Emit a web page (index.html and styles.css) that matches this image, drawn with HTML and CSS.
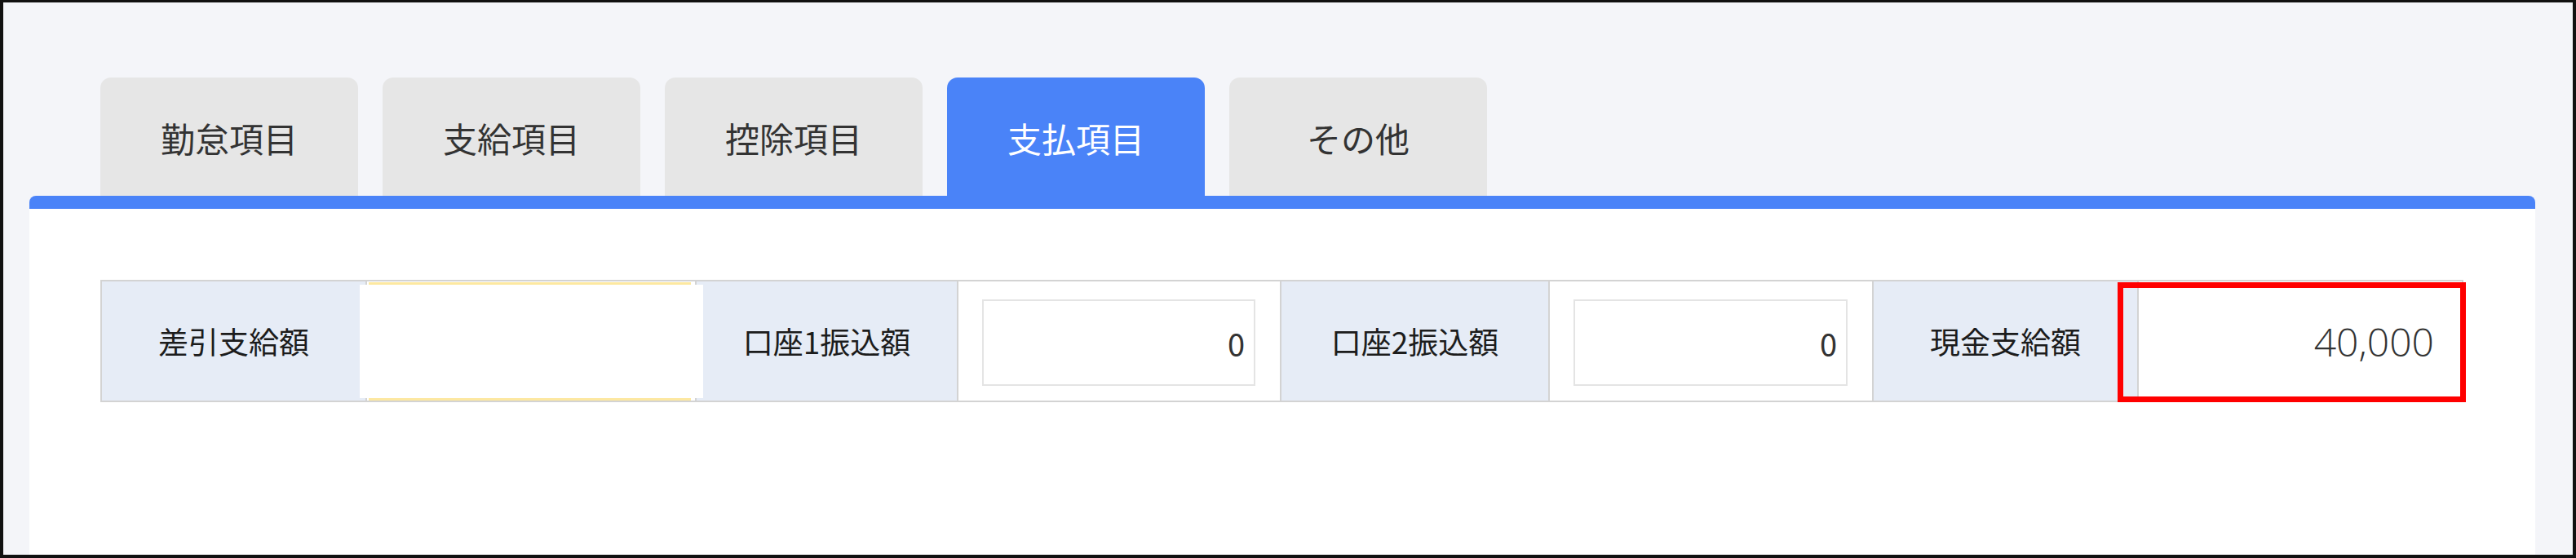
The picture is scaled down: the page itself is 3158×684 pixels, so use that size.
FILE: index.html
```html
<!DOCTYPE html>
<html lang="ja">
<head>
<meta charset="utf-8">
<title>支払項目</title>
<link rel="stylesheet" href="styles.css">
</head>
<body>
<div class="frame">
  <div class="tabs">
    <div class="tab">勤怠項目</div>
    <div class="tab">支給項目</div>
    <div class="tab">控除項目</div>
    <div class="tab active">支払項目</div>
    <div class="tab">その他</div>
  </div>
  <div class="panel">
    <table class="pay">
      <colgroup>
        <col class="c-l1"><col class="c-v1"><col class="c-l2"><col class="c-v2">
        <col class="c-l3"><col class="c-v3"><col class="c-l4"><col class="c-v4">
      </colgroup>
      <tr>
        <td class="label">差引支給額</td>
        <td class="value blank"><div class="field-yellow"></div><div class="mask"></div></td>
        <td class="label">口座1振込額</td>
        <td class="value"><div class="input">0</div></td>
        <td class="label">口座2振込額</td>
        <td class="value"><div class="input">0</div></td>
        <td class="label">現金支給額</td>
        <td class="value cash"><span class="amount">40,000</span><div class="highlight"></div></td>
      </tr>
    </table>
  </div>
</div>
</body>
</html>
```
FILE: styles.css
```css
html, body {
  margin: 0;
  padding: 0;
  background: #ffffff;
}

.frame {
  box-sizing: border-box;
  width: 3158px;
  height: 684px;
  border: 4px solid #111111;
  border-top-width: 3px;
  background: #f4f5f9;
  padding: 92px 46px 0 32px;
  display: flex;
  flex-direction: column;
  font-family: "Noto Sans CJK JP", "Noto Sans", sans-serif;
}

.tabs {
  display: flex;
  gap: 30px;
  margin-left: 87px;
  height: 145px;
  flex: none;
}

.tab {
  width: 316px;
  height: 145px;
  background: #e6e6e6;
  border-radius: 13px 13px 0 0;
  display: flex;
  align-items: center;
  justify-content: center;
  font-size: 42px;
  color: #333333;
  padding-top: 2px;
  box-sizing: border-box;
}

.tab.active {
  background: #4a83f8;
  color: #ffffff;
}

.panel {
  flex: 1;
  background: #ffffff;
  border-top: 16px solid #4a83f8;
  border-radius: 8px 8px 0 0;
  padding: 87px 0 0 87px;
}

.pay {
  border-collapse: collapse;
  table-layout: fixed;
  width: 2897px;
  border: 2px solid #d3d3d3;
}

.c-l1 { width: 325px; }
.c-v1 { width: 404px; }
.c-l2 { width: 321px; }
.c-v2 { width: 396px; }
.c-l3 { width: 329px; }
.c-v3 { width: 397px; }
.c-l4 { width: 325px; }
.c-v4 { width: 398px; }

.pay td {
  border: 2px solid #d3d3d3;
  height: 146px;
  padding: 0;
  box-sizing: border-box;
}

.pay .label {
  background: #e6ecf6;
  text-align: center;
  font-size: 37px;
  color: #1c1c1c;
  white-space: nowrap;
}

.pay .value {
  background: #ffffff;
  vertical-align: top;
}

.pay .blank {
  position: relative;
}

.field-yellow {
  box-sizing: border-box;
  margin: 1px 5px 0 2px;
  height: 145px;
  border-top: 3px solid #fde8a0;
  border-bottom: 3px solid #fde8a0;
}

.mask {
  position: absolute;
  left: -9px;
  right: -10px;
  top: 4px;
  bottom: 3px;
  background: #ffffff;
}

.input {
  box-sizing: border-box;
  height: 106px;
  margin: 22px 30px 0 29px;
  border: 2px solid #e4e4e4;
  display: flex;
  align-items: center;
  justify-content: flex-end;
  padding-right: 11px;
  font-size: 38px;
  color: #333333;
}

.pay .cash {
  position: relative;
  vertical-align: middle;
  text-align: right;
  padding-right: 34px;
}

.amount {
  font-family: "Open Sans", "Noto Sans", sans-serif;
  font-weight: 300;
  font-size: 48px;
  color: #333333;
}

.highlight {
  position: absolute;
  box-sizing: border-box;
  left: -26px;
  right: -5px;
  top: 1px;
  bottom: -2px;
  border: 7px solid #ff0000;
}
```
